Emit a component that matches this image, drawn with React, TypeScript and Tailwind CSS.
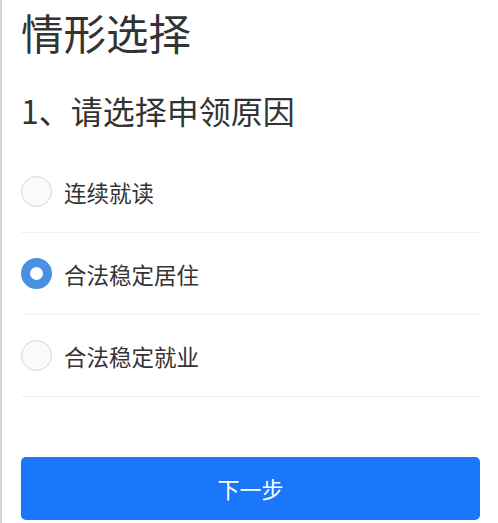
import React, { useState } from "react";

const options = ["连续就读", "合法稳定居住", "合法稳定就业"];

export default function App() {
  const [selected, setSelected] = useState(1);
  return (
    <div
      className="min-h-[523px] w-full border-l-2 border-[#d4d4d4] bg-white pl-[19px] pr-[18px] text-[#333333]"
      style={{ fontFamily: '"Noto Sans CJK SC", "Noto Sans", sans-serif' }}
    >
      <div className="pt-[11px] text-[42.5px] leading-[42px]">情形选择</div>
      <div className="mt-[41px] text-[32px] leading-[32px]">1、请选择申领原因</div>
      <div className="mt-[25px]">
        {options.map((opt, i) => (
          <div
            key={opt}
            className="flex h-[82px] cursor-pointer items-center border-b border-[#f0f0f0]"
            onClick={() => setSelected(i)}
          >
            {selected === i ? (
              <div className="h-[31px] w-[31px] shrink-0 rounded-full border-[9px] border-[#4a90e2] bg-white" />
            ) : (
              <div className="h-[31px] w-[31px] shrink-0 rounded-full border border-[#d6d6d6] bg-[#fafafa]" />
            )}
            <span className="ml-[12px] text-[22.5px] leading-[22px]">{opt}</span>
          </div>
        ))}
      </div>
      <button className="mt-[60px] flex h-[63px] w-full items-center justify-center rounded-[5px] bg-[#1a76fa] text-[22px] text-white">
        下一步
      </button>
    </div>
  );
}
